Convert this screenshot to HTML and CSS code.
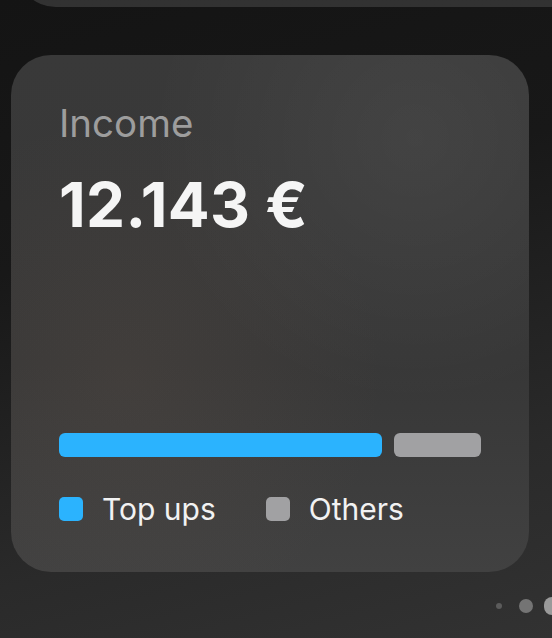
FILE: index.html
```html
<!DOCTYPE html>
<html lang="en">
<head>
<meta charset="utf-8">
<title>Income</title>
<link rel="stylesheet" href="styles.css">
</head>
<body>
<main class="stack">
  <section class="card-prev" aria-hidden="true"></section>
  <section class="card card-income">
    <h2 class="label">Income</h2>
    <p class="amount">12.143 €</p>
    <div class="bars">
      <span class="bar bar-topups" style="flex-grow: 323"></span>
      <span class="bar bar-others" style="flex-grow: 87"></span>
    </div>
    <ul class="legend">
      <li class="legend-item"><span class="swatch swatch-topups"></span>Top ups</li>
      <li class="legend-item"><span class="swatch swatch-others"></span>Others</li>
    </ul>
  </section>
</main>
<nav class="dots" aria-label="pages">
  <span class="dot-slot"><span class="dot dot-sm"></span></span>
  <span class="dot-slot"><span class="dot dot-md"></span></span>
  <span class="dot-edge"></span>
</nav>
</body>
</html>
```

FILE: styles.css
```css
* { box-sizing: border-box; }
html, body { height: 100%; }
body {
  margin: 0;
  overflow: hidden;
  font-family: Inter, "Noto Sans", sans-serif;
  background: linear-gradient(165deg, #141414 0%, #181818 35%, #2a2a2a 75%, #323232 100%);
  color: #f4f4f4;
}
.stack {
  display: flex;
  flex-direction: column;
  gap: 48px;
  padding: 0 23px 0 11px;
  margin-top: -510px;
}
.card-prev {
  height: 517px;
  margin: 0 -23px 0 5px;
  border-radius: 0 0 0 40px;
  background: linear-gradient(180deg, #2c2c2c 0%, #323232 100%);
}
.card {
  height: 517px;
  border-radius: 40px;
  background: #393939;
}
.card-income {
  display: flex;
  flex-direction: column;
  padding: 45px 48px 51px 48px;
  background:
    radial-gradient(circle at 78% 16%, rgba(255,255,255,0.055) 0%, rgba(255,255,255,0) 45%),
    radial-gradient(circle at 22% 62%, rgba(140,110,90,0.12) 0%, rgba(140,110,90,0) 50%),
    linear-gradient(180deg, #393939 0%, #373737 60%, #414141 100%);
}
.label {
  margin: 0;
  font-size: 38.5px;
  line-height: 46px;
  font-weight: 400;
  color: #9d9d9d;
}
.amount {
  margin: 21px 0 0;
  font-size: 62px;
  line-height: 75px;
  font-weight: 700;
  letter-spacing: 0.3px;
  color: #f5f5f5;
}
.bars {
  margin-top: auto;
  display: flex;
  gap: 12px;
}
.bar {
  height: 24px;
  border-radius: 6px;
  flex-basis: 0;
}
.bar-topups { background: #2bb3fe; }
.bar-others { background: #a1a1a3; }
.legend {
  list-style: none;
  margin: 40px 0 0;
  padding: 0;
  display: flex;
  gap: 50px;
}
.legend-item {
  display: flex;
  align-items: center;
  gap: 19px;
  font-size: 30px;
  line-height: 24px;
  color: #f2f2f2;
}
.swatch {
  width: 24px;
  height: 24px;
  border-radius: 5px;
}
.swatch-topups { background: #2bb3fe; }
.swatch-others { background: #a1a1a3; }
.dots {
  display: flex;
  align-items: center;
  justify-content: flex-end;
  height: 24px;
  margin-top: 22px;
}
.dot-slot {
  width: 27px;
  display: flex;
  justify-content: center;
  align-items: center;
}
.dot { border-radius: 50%; display: block; flex: none; }
.dot-sm { width: 6px; height: 6px; background: #5b5b5b; }
.dot-md { width: 14px; height: 14px; background: #747474; }
.dot-edge {
  width: 8px;
  height: 18px;
  margin-left: 4.5px;
  border-radius: 9px 0 0 9px / 9px 0 0 9px;
  background: #9a9a9a;
}
```
